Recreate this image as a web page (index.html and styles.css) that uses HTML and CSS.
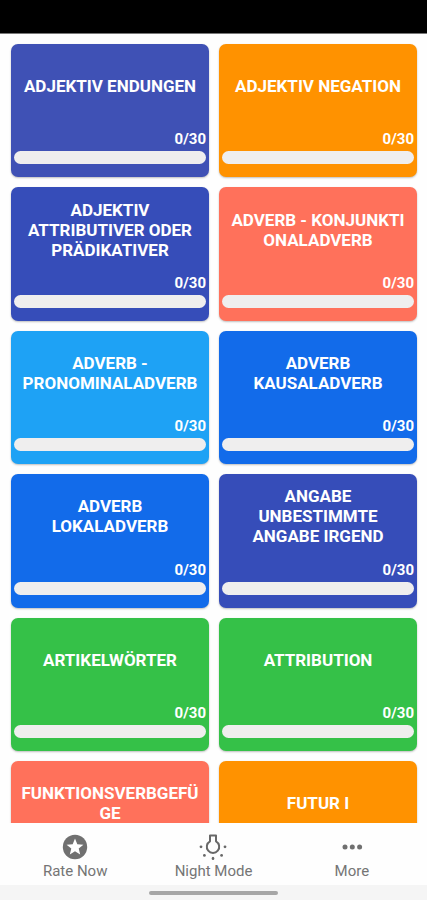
FILE: index.html
```html
<!DOCTYPE html>
<html lang="de">
<head>
    <meta charset="UTF-8">
    <meta name="viewport" content="width=device-width, initial-scale=1.0">
    <title>Grammatik Quiz</title>
    <link rel="stylesheet" href="styles.css">
</head>
<body>
    <div class="status-bar"></div>

    <main class="topics">
        <button class="topic indigo-light">
            <span class="title">ADJEKTIV ENDUNGEN</span>
            <span class="count">0/30</span>
            <progress class="bar" value="0" max="30" aria-label="Adjektiv Endungen"></progress>
        </button>
        <button class="topic orange">
            <span class="title">ADJEKTIV NEGATION</span>
            <span class="count">0/30</span>
            <progress class="bar" value="0" max="30" aria-label="Adjektiv Negation"></progress>
        </button>
        <button class="topic indigo">
            <span class="title">ADJEKTIV<br>ATTRIBUTIVER ODER<br>PRÄDIKATIVER</span>
            <span class="count">0/30</span>
            <progress class="bar" value="0" max="30" aria-label="Adjektiv attributiver oder prädikativer"></progress>
        </button>
        <button class="topic coral">
            <span class="title">ADVERB - KONJUNKTI<br>ONALADVERB</span>
            <span class="count">0/30</span>
            <progress class="bar" value="0" max="30" aria-label="Adverb - Konjunktionaladverb"></progress>
        </button>
        <button class="topic sky">
            <span class="title">ADVERB -<br>PRONOMINALADVERB</span>
            <span class="count">0/30</span>
            <progress class="bar" value="0" max="30" aria-label="Adverb - Pronominaladverb"></progress>
        </button>
        <button class="topic blue">
            <span class="title">ADVERB<br>KAUSALADVERB</span>
            <span class="count">0/30</span>
            <progress class="bar" value="0" max="30" aria-label="Adverb Kausaladverb"></progress>
        </button>
        <button class="topic blue">
            <span class="title">ADVERB<br>LOKALADVERB</span>
            <span class="count">0/30</span>
            <progress class="bar" value="0" max="30" aria-label="Adverb Lokaladverb"></progress>
        </button>
        <button class="topic indigo">
            <span class="title">ANGABE<br>UNBESTIMMTE<br>ANGABE IRGEND</span>
            <span class="count">0/30</span>
            <progress class="bar" value="0" max="30" aria-label="Angabe unbestimmte Angabe irgend"></progress>
        </button>
        <button class="topic green">
            <span class="title">ARTIKELWÖRTER</span>
            <span class="count">0/30</span>
            <progress class="bar" value="0" max="30" aria-label="Artikelwörter"></progress>
        </button>
        <button class="topic green">
            <span class="title">ATTRIBUTION</span>
            <span class="count">0/30</span>
            <progress class="bar" value="0" max="30" aria-label="Attribution"></progress>
        </button>
        <button class="topic coral">
            <span class="title">FUNKTIONSVERBGEFÜ<br>GE</span>
            <span class="count">0/30</span>
            <progress class="bar" value="0" max="30" aria-label="Funktionsverbgefüge"></progress>
        </button>
        <button class="topic orange">
            <span class="title">FUTUR I</span>
            <span class="count">0/30</span>
            <progress class="bar" value="0" max="30" aria-label="Futur I"></progress>
        </button>
    </main>

    <nav class="bottom-nav">
        <button class="nav-item">
            <svg class="icon" viewBox="0 0 28 28" aria-hidden="true">
                <circle cx="14" cy="14" r="12.2" fill="#707070"/>
                <path d="M14 5.6l2.3 5.7 6.1.4-4.7 3.9 1.5 6L14 18.3l-5.2 3.3 1.5-6-4.7-3.9 6.1-.4z" fill="#fff"/>
            </svg>
            <span>Rate Now</span>
        </button>
        <button class="nav-item">
            <svg class="icon" viewBox="0 0 28 28" aria-hidden="true">
                <path d="M11 2.5h6v5.8a6.2 6.2 0 1 1-6 0z" fill="none" stroke="#686868" stroke-width="2" stroke-linejoin="round"/>
                <g fill="#686868">
                    <circle cx="2" cy="13.8" r="1.4"/>
                    <circle cx="26" cy="13.8" r="1.4"/>
                    <circle cx="5.4" cy="22.4" r="1.4"/>
                    <circle cx="22.6" cy="22.4" r="1.4"/>
                    <ellipse cx="14" cy="25.4" rx="1.3" ry="1.7"/>
                </g>
            </svg>
            <span>Night Mode</span>
        </button>
        <button class="nav-item">
            <svg class="icon" viewBox="0 0 28 28" aria-hidden="true">
                <g fill="#707070">
                    <circle cx="7" cy="14" r="2.5"/>
                    <circle cx="14.3" cy="14" r="2.5"/>
                    <circle cx="21.6" cy="14" r="2.5"/>
                </g>
            </svg>
            <span>More</span>
        </button>
    </nav>

    <div class="gesture-bar">
        <div class="handle"></div>
    </div>
</body>
</html>
```
FILE: styles.css
```css
* {
    box-sizing: border-box;
}

body {
    margin: 0;
    height: 100vh;
    display: flex;
    flex-direction: column;
    overflow: hidden;
    background-color: #fefefe;
    font-family: Roboto, sans-serif;
}

button {
    border: none;
    background: none;
    font-family: inherit;
    cursor: pointer;
}

.status-bar {
    flex: none;
    height: 34px;
    background-color: #000;
    border-bottom: 1px solid #777;
}

/* Topic grid, scrolls above the bottom navigation */
.topics {
    flex: 1;
    min-height: 0;
    overflow-y: auto;
    scrollbar-width: none;
    display: grid;
    grid-template-columns: 1fr 1fr;
    align-content: start;
    gap: 10px;
    padding: 10px 10px 10px 11px;
}

.topic {
    display: flex;
    flex-direction: column;
    width: 100%;
    aspect-ratio: 95 / 64;
    padding: 0 3px 13px;
    border-radius: 7px;
    color: #fff;
    font-weight: bold;
    box-shadow: 0 1px 2px rgba(0, 0, 0, 0.25);
}

.indigo-light { background-color: #3f51b5; }
.indigo { background-color: #364db9; }
.orange { background-color: #ff9200; }
.coral { background-color: #ff715b; }
.sky { background-color: #1ea2f5; }
.blue { background-color: #126bea; }
.green { background-color: #35c148; }

.title {
    flex: 1;
    display: flex;
    align-items: center;
    justify-content: center;
    padding-bottom: 2px;
    font-size: 17px;
    line-height: 20px;
    text-align: center;
}

.count {
    margin-bottom: 3px;
    font-size: 15px;
    line-height: 18px;
    text-align: right;
}

.bar {
    appearance: none;
    display: block;
    flex: none;
    width: 100%;
    height: 13px;
    border: none;
    border-radius: 7px;
    overflow: hidden;
    background-color: #efeeee;
}

.bar::-webkit-progress-bar {
    background-color: #efeeee;
}

.bar::-webkit-progress-value {
    background-color: #35c148;
}

/* Bottom navigation */
.bottom-nav {
    flex: none;
    display: flex;
    height: 62px;
    padding: 0 6px;
    background-color: #fefefe;
}

.nav-item {
    flex: 1;
    display: flex;
    flex-direction: column;
    align-items: center;
    padding: 10px 0 0;
    color: #757575;
    font-size: 15px;
    line-height: 20px;
}

.icon {
    width: 28px;
    height: 28px;
}

.gesture-bar {
    flex: none;
    display: flex;
    justify-content: center;
    align-items: center;
    height: 15px;
    background-color: #f5f5f5;
}

.handle {
    width: 30%;
    height: 4px;
    border-radius: 2px;
    background-color: #a6a6a6;
}
```
